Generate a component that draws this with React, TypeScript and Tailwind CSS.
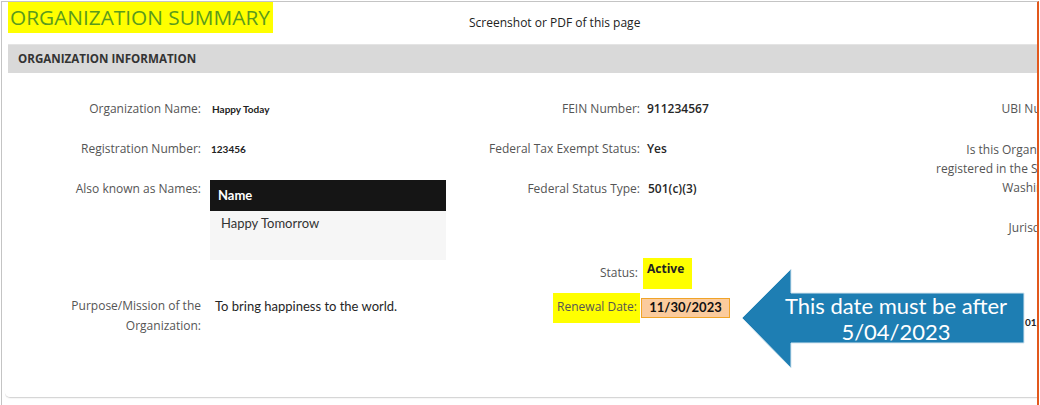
export default function App() {
  const label = "shrink-0 text-right text-[12px] leading-[20px] text-[#555] whitespace-nowrap";
  const val = "text-[12px] leading-[20px] font-semibold text-[#262626] whitespace-nowrap";
  const small = "font-['Lato',sans-serif] text-[10px] leading-[20px] font-bold text-[#222] whitespace-nowrap";
  return (
    <div className="relative w-[1040px] h-[405px] overflow-hidden bg-white font-['Open_Sans',sans-serif]">
      <div className="ml-px mt-px w-[1038px] h-[404px] border-l border-t border-[#c4c4c4] border-r-2 border-r-[#e2581c] overflow-hidden">
        {/* header */}
        <div className="flex items-start h-[42px] pl-[6px]">
          <div className="shrink-0 h-[31px] w-[265px] bg-[#ffff00] pl-[2px] text-[20.8px] leading-[31px] text-[#5b9b1d] whitespace-nowrap">
            ORGANIZATION SUMMARY
          </div>
          <div className="shrink-0 ml-[196px] mt-[12px] text-[12px] leading-[18px] text-[#222] whitespace-nowrap">
            Screenshot or PDF of this page
          </div>
        </div>
        {/* panel */}
        <div className="ml-[3px] h-[354px] rounded-bl-[5px] border-b border-[#d6d6d6] shadow-[0_1px_1px_rgba(0,0,0,0.04)]">
          <div className="ml-[3px] h-[29px] bg-[#d9d9d9] border-t border-[#e4e4e4] pl-[10px] flex items-center text-[11.6px] font-bold text-[#333] whitespace-nowrap">
            ORGANIZATION INFORMATION
          </div>
          <div className="flex pt-[26px]">
            {/* column 1 */}
            <div className="w-[440px] shrink-0 flex flex-col">
              <div className="flex h-[20px] items-center">
                <div className={`${label} w-[196px]`}>Organization Name:</div>
                <div className={`${small} ml-[11px]`}>Happy Today</div>
              </div>
              <div className="flex h-[20px] items-center mt-[20px]">
                <div className={`${label} w-[196px]`}>Registration Number:</div>
                <div className={`${small} ml-[10px]`}>123456</div>
              </div>
              <div className="flex mt-[20px]">
                <div className={`${label} w-[196px]`}>Also known as Names:</div>
                <div className="ml-[9px] mt-[1px] w-[236px] shrink-0 font-['Lato',sans-serif]">
                  <div className="h-[31px] bg-[#151515] pl-[8px] flex items-center text-[13px] font-bold text-white">Name</div>
                  <div className="h-[49px] bg-[#f6f6f6] pl-[11px] pt-[2px] text-[13px] leading-[20px] text-[#333]">Happy Tomorrow</div>
                </div>
              </div>
              <div className="flex mt-[36px]">
                <div className={`${label} w-[196px]`}>
                  Purpose/Mission of the
                  <br />
                  Organization:
                </div>
                <div className="ml-[14px] font-['Lato',sans-serif] text-[13px] leading-[20px] text-[#262626] whitespace-nowrap">
                  To bring happiness to the world.
                </div>
              </div>
            </div>
            {/* column 2 */}
            <div className="w-[385px] shrink-0 flex flex-col">
              <div className="flex h-[20px] items-center">
                <div className={`${label} w-[195px]`}>FEIN Number:</div>
                <div className={`${val} ml-[7px]`}>911234567</div>
              </div>
              <div className="flex h-[20px] items-center mt-[20px]">
                <div className={`${label} w-[195px]`}>Federal Tax Exempt Status:</div>
                <div className={`${val} ml-[7px] font-bold`}>Yes</div>
              </div>
              <div className="flex h-[20px] items-center mt-[20px]">
                <div className={`${label} w-[195px]`}>Federal Status Type:</div>
                <div className={`${val} ml-[8px] font-bold`}>501(c)(3)</div>
              </div>
              <div className="flex h-[20px] items-center mt-[64px]">
                <div className={`${label} w-[193px]`}>Status:</div>
                <div className="ml-[5px] -my-[6px] pl-[4px] pr-[8px] pt-[1px] pb-[10px] bg-[#ffff00] text-[12px] leading-[20px] font-bold text-[#222]">
                  Active
                </div>
              </div>
              <div className="flex h-[20px] items-center mt-[15px]">
                <div className="w-[195px] shrink-0 flex justify-end">
                  <div className="-my-[6px] pl-[4px] pr-[3px] pt-[4px] pb-[6px] bg-[#ffff00] text-[12px] leading-[20px] text-[#555] whitespace-nowrap">
                    Renewal Date:
                  </div>
                </div>
                <div className="ml-[1px] h-[20px] w-[89px] shrink-0 bg-[#fbcb9d] border border-[#f0a428] flex items-center justify-center font-['Lato',sans-serif] text-[13px] font-bold text-[#111]">
                  11/30/2023
                </div>
              </div>
            </div>
            {/* column 3 */}
            <div className="w-[400px] shrink-0 flex flex-col">
              <div className="flex h-[20px] items-center">
                <div className={`${label} w-[244px]`}>UBI Number:</div>
              </div>
              <div className="flex mt-[21px]">
                <div className="w-[244px] shrink-0 text-right text-[12px] leading-[19px] text-[#555] whitespace-nowrap">
                  Is this Organization
                  <br />
                  registered in the State of
                  <br />
                  Washington?
                </div>
              </div>
              <div className="flex h-[20px] items-center mt-[21px]">
                <div className={`${label} w-[244px]`}>Jurisdiction:</div>
              </div>
              <div className={`${small} mt-[74px] pl-[195px] h-[20px]`}>01/15/2022</div>
            </div>
          </div>
        </div>
      </div>
      {/* callout arrow */}
      <svg className="absolute left-0 top-0 pointer-events-none" width="1040" height="405" viewBox="0 0 1040 405">
        <polygon
          points="742,318 791,269 791,293 1024,293 1024,343 791,343 791,368"
          fill="#1e7eb3"
          stroke="#d5e6f0"
          strokeWidth="1"
        />
      </svg>
      <div className="absolute left-[760px] top-[293px] w-[272px] text-center font-['Lato',sans-serif] text-[22px] leading-[26px] text-white whitespace-nowrap">
        This date must be after
        <br />
        5/04/2023
      </div>
    </div>
  );
}
